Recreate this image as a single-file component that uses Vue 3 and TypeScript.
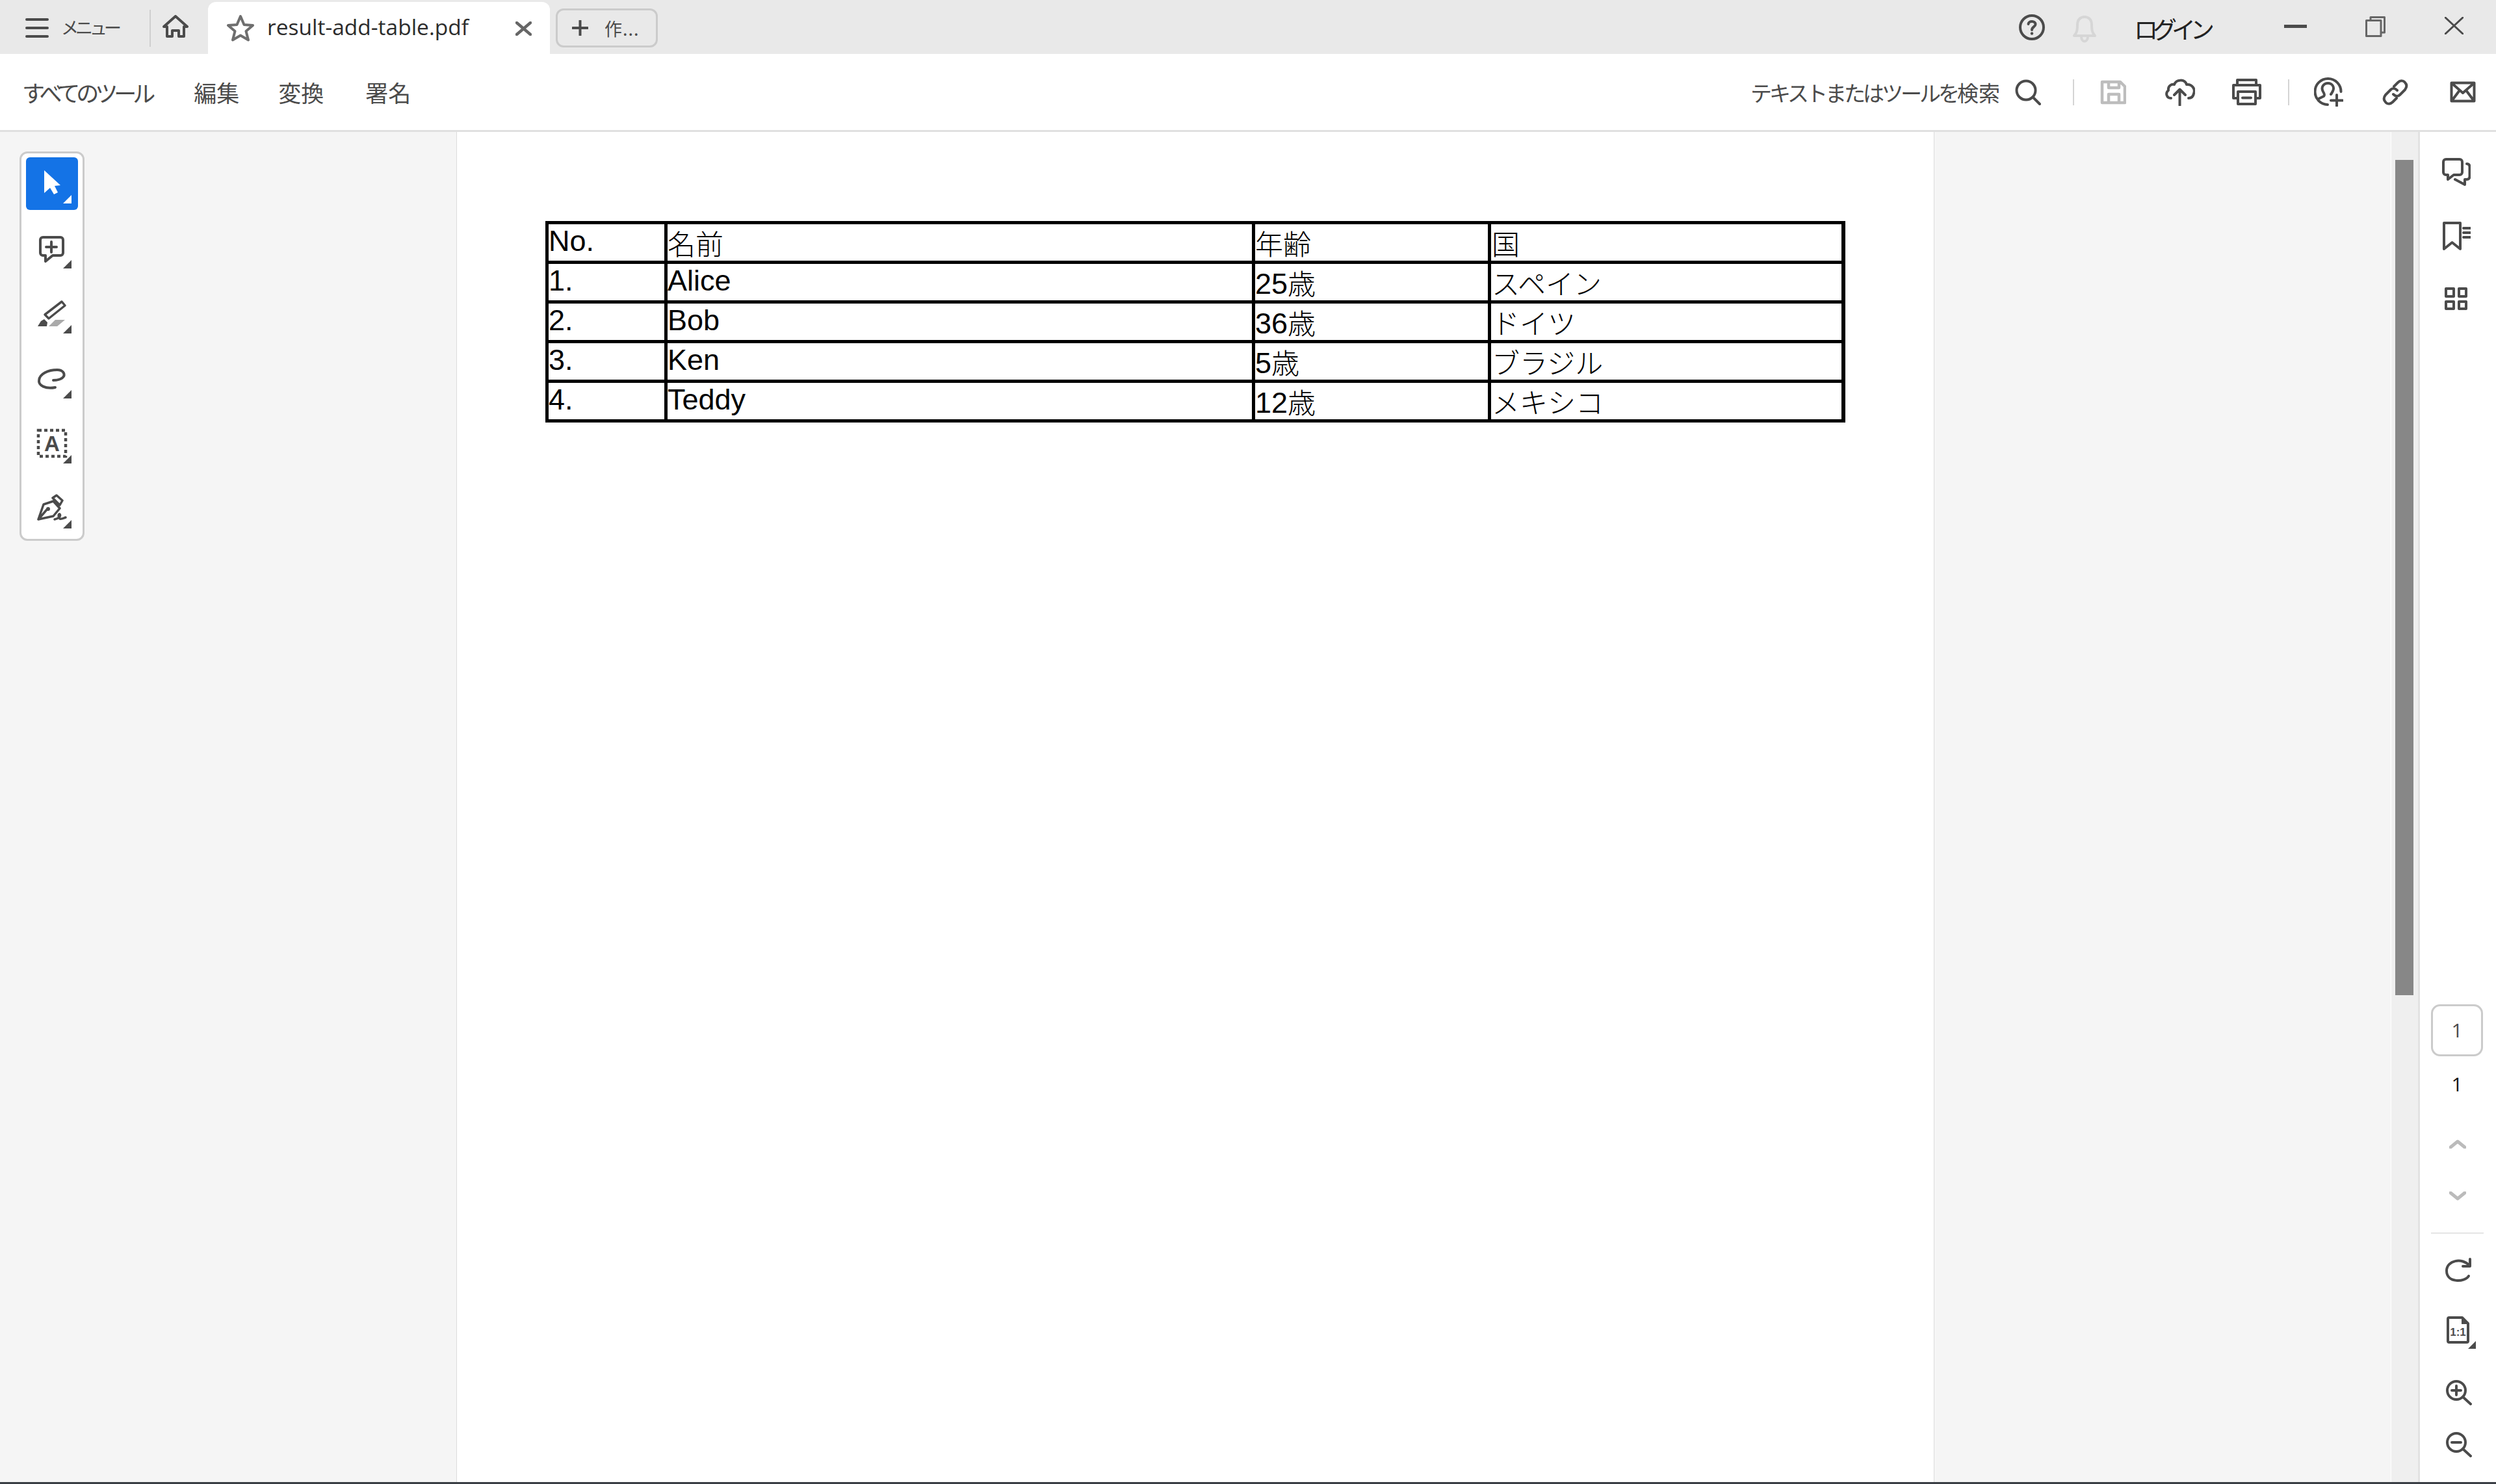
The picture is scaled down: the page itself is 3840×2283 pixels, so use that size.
<script setup lang="ts">
interface Row { no: string; name: string; age: string; unit: string; country: string }
const rows: Row[] = [
  { no: '1.', name: 'Alice', age: '25', unit: '歳', country: 'スペイン' },
  { no: '2.', name: 'Bob', age: '36', unit: '歳', country: 'ドイツ' },
  { no: '3.', name: 'Ken', age: '5', unit: '歳', country: 'ブラジル' },
  { no: '4.', name: 'Teddy', age: '12', unit: '歳', country: 'メキシコ' },
]
</script>

<template>
  <div class="app">
    <header class="topbar">
      <svg class="i-ham" viewBox="0 0 36 30"><path d="M2 2H34M2 15H34M2 28H34" /></svg>
      <span class="menu-label">メニュー</span>
      <span class="vsep"></span>
      <svg class="i-home" viewBox="0 0 40 36"><path d="M2 18L20 2L38 18H33V33H25V24H15V33H7V18Z" /></svg>
      <div class="tab">
        <svg class="i-star" viewBox="0 0 44 42"><path d="M22 3L27.5 16L41 17L30.5 26L34 39.500L22 32.500L10 39.500L13.500 26L3 17L16.500 16Z" /></svg>
        <span class="tab-title">result-add-table.pdf</span>
        <svg class="i-x" viewBox="0 0 25 22"><path d="M2 2L23 20M23 2L2 20" /></svg>
      </div>
      <button class="newtab">
        <svg class="i-plus" viewBox="0 0 25 24"><path d="M12.500 1V23M1 12H24" /></svg>
        <span>作...</span>
      </button>
      <div class="spacer"></div>
      <svg class="i-help" viewBox="0 0 40 40"><circle cx="20" cy="20" r="18" /><path d="M14.500 15C15 9.500 25.500 9.500 25.500 15.500C25.500 19 20 19.500 20 24" /><circle class="dot" cx="20" cy="29.500" r="2.200" /></svg>
      <svg class="i-bell" viewBox="0 0 38 43"><path d="M3 32C8 27 8 21 8 15C8 7 13 3 19 3C25 3 30 7 30 15C30 21 30 27 35 32ZM14 33C14 43 24 43 24 33" /></svg>
      <span class="login">ログイン</span>
      <span class="win-min"></span>
      <svg class="i-restore" viewBox="0 0 31 32"><path d="M8 6V1.500H29.500V25H24M1.500 6.500H24V30.500H1.500Z" /></svg>
      <svg class="i-close" viewBox="0 0 29 27"><path d="M1 1L28 26M28 1L1 26" /></svg>
    </header>

    <nav class="toolbar">
      <span class="nav nav-all"><span class="kana">すべてのツール</span></span>
      <span class="nav nav-edit">編集</span>
      <span class="nav nav-conv">変換</span>
      <span class="nav nav-sign">署名</span>
      <div class="spacer"></div>
      <span class="search-text"><span class="kana">テキストまたはツールを</span>検索</span>
      <svg class="i-search" viewBox="0 0 40 40"><circle cx="17" cy="17" r="14.500" /><path d="M27.500 27.500L38 38" /></svg>
      <span class="vsep2 sep-a"></span>
      <svg class="i-save" viewBox="0 0 40 38"><path d="M3 3H31L38 10V35H3ZM13 3V12H29V3M13 35V22H29V35" /></svg>
      <svg class="i-cloud" viewBox="0 0 46 42"><path d="M9 30C2 30 0 22 5 18C4 11 10 8 14 9C17 1 30 0 33 9C41 8 47 16 44 23C43 28 40 30 36 30M22.500 41V17M14 25L22.500 16.500L31 25" /></svg>
      <svg class="i-print" viewBox="0 0 45 41"><path d="M8 10V2H37V10M8 30H2V10H43V30H37M9 20H36V39H9ZM16 29.500H29" /></svg>
      <span class="vsep2 sep-b"></span>
      <svg class="i-share" viewBox="0 0 45 45"><path d="M21 42A20 20 0 1 1 41.500 22M7 33L15 29C17 27 16 25 14 22C10 15 15 9 21.500 9C28 9 32 15 29 21C28 23 27 25 26 26M35 27V44M26 35.500H44" /></svg>
      <svg class="i-link" viewBox="0 0 40 40"><path d="M18 11L24 5C28 1 33 2 35 5C38 8 38 12 35 16L27 24C24 27 20 26 17 23M22 29L16 35C12 39 7 38 5 35C2 32 2 28 5 24L13 16C16 13 20 14 23 17" /></svg>
      <svg class="i-mail" viewBox="0 0 40 33"><path d="M2.500 2.500H37.500V30.500H2.500ZM3 3L20 18L37 3M3 30L15 14M37 30L25 14" /></svg>
    </nav>

    <main class="main">
      <aside class="left">
        <div class="tools">
          <div class="tool active">
            <svg viewBox="0 0 80 81"><path class="fw" d="M28 20L53 43L44 44L49 54L43 57L37 47L28 55Z" /><path class="fw" d="M57 71L70 58V71Z" /></svg>
          </div>
          <div class="tool">
            <svg viewBox="0 0 80 81"><path class="st" d="M26 23H53A4 4 0 0 1 57 27V47A4 4 0 0 1 53 51H41L30 60V51H26A4 4 0 0 1 22 47V27A4 4 0 0 1 26 23ZM39 30V46M31 38H47" /><path class="fd" d="M57 71L70 58V71Z" /></svg>
          </div>
          <div class="tool">
            <svg viewBox="0 0 80 81"><path class="st thin" d="M55 22L60 28L35 48L29 42Z" /><path class="fd" d="M18 60L23 52L28 49L33 54L32 60Z" /><path class="fg" d="M45 50H60L48 60H35Z" /><path class="fd" d="M57 71L70 58V71Z" /></svg>
          </div>
          <div class="tool">
            <svg viewBox="0 0 80 81"><path class="st" d="M45 54C30 57 19 51 20 43C21 33 34 27 48 27C57 27 60 33 58 37C55 42 46 43 42 43" /><path class="fd" d="M57 71L70 58V71Z" /></svg>
          </div>
          <div class="tool">
            <svg viewBox="0 0 80 81"><rect class="st dash" x="19" y="20" width="42" height="40" /><text class="a-text" x="40" y="52" text-anchor="middle">A</text><path class="fd" d="M57 71L70 58V71Z" /></svg>
          </div>
          <div class="tool">
            <svg viewBox="0 0 80 81"><path class="st thin" d="M42 29L27 34L19 57L42 52L52 40ZM19 57L32 42M41 24L47 20L56 28L52 35Z" /><circle class="fd" cx="34" cy="41" r="3" /><path class="st thin" d="M44 57C50 56 54 52 52 49C50 48 49 53 52 56C55 57 58 55 61 54" /><path class="fd" d="M57 71L70 58V71Z" /></svg>
          </div>
        </div>
      </aside>

      <section class="page">
        <table class="doc">
          <colgroup><col class="c1" /><col class="c2" /><col class="c3" /><col class="c4" /></colgroup>
          <tbody>
            <tr>
              <td>No.</td>
              <td><span class="cjk">名前</span></td>
              <td><span class="cjk">年齢</span></td>
              <td><span class="cjk">国</span></td>
            </tr>
            <tr v-for="r in rows" :key="r.no">
              <td>{{ r.no }}</td>
              <td>{{ r.name }}</td>
              <td><span class="digits">{{ r.age }}</span><span class="cjk">{{ r.unit }}</span></td>
              <td><span class="cjk">{{ r.country }}</span></td>
            </tr>
          </tbody>
        </table>
      </section>

      <div class="gutter"></div>
      <div class="scroll"><div class="thumb"></div></div>

      <aside class="right">
        <svg class="r-comment" viewBox="0 0 44 44"><path d="M6 2H27A4 4 0 0 1 31 6V22A4 4 0 0 1 27 26H18L9 33V26H6A4 4 0 0 1 2 22V6A4 4 0 0 1 6 2ZM38 9Q42.500 9 42.500 14V28Q42.500 33 38 33H35V41L20 33" /></svg>
        <svg class="r-bookmark" viewBox="0 0 44 45"><path d="M3 3H28V43L15.500 33L3 43ZM33 11H44M33 18H44M33 25H44" /></svg>
        <svg class="r-grid" viewBox="0 0 35 35"><path d="M2 2H14V14H2ZM22 2H33V14H22ZM2 22H14V33H2ZM22 22H33V33H22Z" /></svg>
        <div class="pagebox">1</div>
        <div class="pagetotal">1</div>
        <svg class="r-chev up" viewBox="0 0 26 14"><path d="M2 12L13 3L24 12" /></svg>
        <svg class="r-chev down" viewBox="0 0 26 14"><path d="M2 2L13 11L24 2" /></svg>
        <div class="r-sep"></div>
        <svg class="r-refresh" viewBox="0 0 40 38"><path d="M36 28C30 38 2 39 2 20C2 4 26 -1 37 12M38 2V13H27" /></svg>
        <svg class="r-doc" viewBox="0 0 46 50"><path class="st" d="M4 2H24L33 11V38Q33 40 31 40H4Q2 40 2 38V4Q2 2 4 2Z" /><path class="fd" d="M23 1L34 12H23Z" /><text class="one" x="17.500" y="30" text-anchor="middle">1:1</text><path class="fd" d="M33 50L45 38V50Z" /></svg>
        <svg class="r-zoom zin" viewBox="0 0 40 40"><circle cx="16" cy="16" r="14" /><path d="M26 26L38 37M16 9V23M9 16H23" /></svg>
        <svg class="r-zoom zout" viewBox="0 0 40 40"><circle cx="16" cy="16" r="14" /><path d="M26 26L38 37M9 16H23" /></svg>
      </aside>
    </main>
    <div class="edge"></div>
  </div>
</template>

<style>
html, body { margin: 0; padding: 0; background: #fff; }
</style>

<style scoped>
.app {
  width: 3840px;
  height: 2283px;
  overflow: hidden;
  display: flex;
  flex-direction: column;
  font-family: "Noto Sans CJK JP", "Noto Sans", sans-serif;
  color: #4b4b4b;
}
svg { display: block; flex: none; fill: none; stroke: #4b4b4b; stroke-width: 4; stroke-linecap: round; stroke-linejoin: round; }
.spacer { flex: 1; }
.kana { letter-spacing: -4px; }
.nav-all .kana { letter-spacing: -6px; }

.topbar { height: 83px; flex: none; background: #e9e9e9; display: flex; align-items: flex-start; padding: 0 50px 0 39px; box-sizing: border-box; }
.i-ham { width: 36px; height: 30px; margin-top: 28px; }
.menu-label { width: 136px; margin-left: 19px; margin-top: 22px; font-size: 27px; line-height: 40px; letter-spacing: -5px; white-space: nowrap; }
.vsep { width: 2px; height: 57px; margin-top: 15px; background: #cfcfcf; }
.i-home { width: 40px; height: 36px; margin-left: 18px; margin-top: 23px; }
.tab { width: 526px; height: 80px; margin-left: 30px; margin-top: 3px; background: #fff; border-radius: 12px 12px 0 0; display: flex; align-items: flex-start; }
.i-star { width: 44px; height: 42px; margin-left: 28px; margin-top: 19px; stroke: #6e6e6e; }
.tab-title { width: 382px; margin-left: 19px; margin-top: 16px; font-family: "Open Sans", sans-serif; font-size: 33.500px; line-height: 44px; color: #2c2c2c; white-space: nowrap; }
.i-x { width: 25px; height: 22px; margin-top: 30px; stroke: #666; stroke-width: 4.500; }
.newtab { width: 157px; height: 60px; margin-left: 9px; margin-top: 13px; padding: 0 0 0 22px; box-sizing: border-box; border: 3px solid #cbcbcb; border-radius: 12px; background: #e9e9e9; display: flex; align-items: center; gap: 25px; font-family: inherit; font-size: 27px; color: #4b4b4b; }
.newtab span { letter-spacing: 1px; }
.i-plus { width: 25px; height: 24px; }
.i-help { width: 40px; height: 40px; margin-top: 22px; }
.i-help .dot { fill: #4b4b4b; stroke: none; }
.i-bell { width: 38px; height: 43px; margin-left: 42px; margin-top: 23px; stroke: #d6d6d6; }
.login { width: 124px; margin-left: 57px; margin-top: 20px; font-size: 37px; line-height: 48px; letter-spacing: -8px; color: #222; white-space: nowrap; }
.win-min { width: 35px; height: 5px; margin-left: 107px; margin-top: 38px; background: #4b4b4b; }
.i-restore { width: 31px; height: 32px; margin-left: 90px; margin-top: 25px; stroke: #666; stroke-width: 3; stroke-linecap: butt; }
.i-close { width: 29px; height: 27px; margin-left: 91px; margin-top: 26px; stroke-width: 3; }

.toolbar { height: 120px; flex: none; box-sizing: border-box; border-bottom: 3px solid #e0e0e0; display: flex; align-items: center; padding: 0 31px 0 34px; background: #fff; }
.nav { font-size: 35px; line-height: 50px; white-space: nowrap; }
.nav-edit { margin-left: 65px; }
.nav-conv { margin-left: 60px; }
.nav-sign { margin-left: 64px; }
.search-text { font-size: 33px; line-height: 50px; white-space: nowrap; }
.i-search { width: 40px; height: 40px; margin-left: 23px; }
.vsep2 { width: 2px; height: 40px; background: #d4d4d4; }
.sep-a { margin-left: 49px; }
.i-save { width: 40px; height: 38px; margin-left: 40px; stroke: #bdbdbd; stroke-width: 4.500; }
.i-cloud { width: 46px; height: 42px; margin-left: 60px; }
.i-print { width: 45px; height: 41px; margin-left: 57px; }
.sep-b { margin-left: 41px; }
.i-share { width: 45px; height: 45px; margin-left: 38px; }
.i-link { width: 40px; height: 40px; margin-left: 60px; }
.i-mail { width: 40px; height: 33px; margin-left: 64px; }

.main { flex: 1; min-height: 0; display: flex; background: #f5f5f5; }
.left { width: 702px; flex: none; padding: 30px 0 0 30px; box-sizing: border-box; }
.tools { width: 100px; height: 599px; box-sizing: border-box; background: #fff; border: 3px solid #cbcbcb; border-radius: 12px; padding: 6px 7px; display: flex; flex-direction: column; gap: 19px; }
.tool { width: 80px; height: 81px; flex: none; border-radius: 6px; }
.tool svg, .r-doc { stroke: none; }
.tool svg { width: 80px; height: 81px; }
.active { background: #1473e6; }
.fw { fill: #fff; }
.fd { fill: #4b4b4b; stroke: none; }
.fg { fill: #aaa; stroke: none; }
.st { fill: none; stroke: #4b4b4b; stroke-width: 4; stroke-linecap: round; stroke-linejoin: round; }
.thin { stroke-width: 3.500; }
.dash { stroke-dasharray: 5 4; stroke-width: 4.500; stroke-linecap: butt; stroke-linejoin: miter; }
.a-text { font-family: "Liberation Sans", sans-serif; font-weight: 700; font-size: 33px; fill: #4b4b4b; stroke: none; }

.page { width: 2274px; flex: none; box-sizing: border-box; background: #fff; border-left: 1px solid #dcdcdc; border-right: 1px solid #dcdcdc; padding: 137px 0 0 136px; }
.doc { table-layout: fixed; width: 2000px; border-collapse: separate; border-spacing: 0; border-top: 5px solid #000; border-left: 5px solid #000; color: #000; font-family: "Liberation Sans", sans-serif; font-size: 45px; line-height: 51px; }
.c1 { width: 183px; }
.c2 { width: 904px; }
.c3 { width: 363px; }
.c4 { width: 545px; }
.doc td { height: 61px; padding: 0; box-sizing: border-box; border-right: 5px solid #000; border-bottom: 5px solid #000; vertical-align: top; white-space: nowrap; }
.doc td:last-child { border-right-width: 6px; padding-left: 1px; }
.cjk { font-family: "Noto Sans CJK JP", sans-serif; font-size: 43px; font-weight: 300; vertical-align: -6px; line-height: 40px; }
.digits { vertical-align: -5px; line-height: 40px; }

.gutter { flex: 1; }
.scroll { width: 45px; flex: none; box-sizing: border-box; background: #efefef; border-left: 1px solid #fff; border-right: 3px solid #e2e2e2; padding: 43px 0 0 6px; }
.thumb { width: 28px; height: 1285px; background: #878787; }

.right { width: 117px; flex: none; background: #fff; display: flex; flex-direction: column; align-items: flex-start; }
.r-comment { width: 44px; height: 44px; margin: 40px 0 0 34px; }
.r-bookmark { width: 44px; height: 45px; margin: 53px 0 0 34px; }
.r-grid { width: 35px; height: 35px; margin: 57px 0 0 38px; }
.pagebox { width: 80px; height: 80px; margin: 1068px 0 0 17px; box-sizing: border-box; border: 3px solid #cbcbcb; border-radius: 14px; text-align: center; font-family: "Open Sans", sans-serif; font-size: 30px; line-height: 74px; color: #4b4b4b; }
.pagetotal { width: 80px; margin: 23px 0 0 17px; text-align: center; font-family: "Open Sans", sans-serif; font-size: 30px; line-height: 40px; color: #111; }
.r-chev { width: 26px; height: 14px; margin-left: 45px; stroke: #bbb; stroke-width: 5; }
.up { margin-top: 65px; }
.down { margin-top: 66px; }
.r-sep { width: 81px; height: 2px; margin: 49px 0 0 17px; background: #e5e5e5; }
.r-refresh { width: 40px; height: 38px; margin: 37px 0 0 39px; }
.r-doc { width: 46px; height: 50px; margin: 52px 0 0 41px; }
.one { font-family: "Liberation Sans", sans-serif; font-weight: 700; font-size: 17px; fill: #4b4b4b; stroke: none; }
.r-zoom { width: 40px; height: 40px; margin-left: 40px; }
.zin { margin-top: 48px; }
.zout { margin-top: 40px; }

.edge { height: 3px; flex: none; background: #3a3f45; }
</style>
